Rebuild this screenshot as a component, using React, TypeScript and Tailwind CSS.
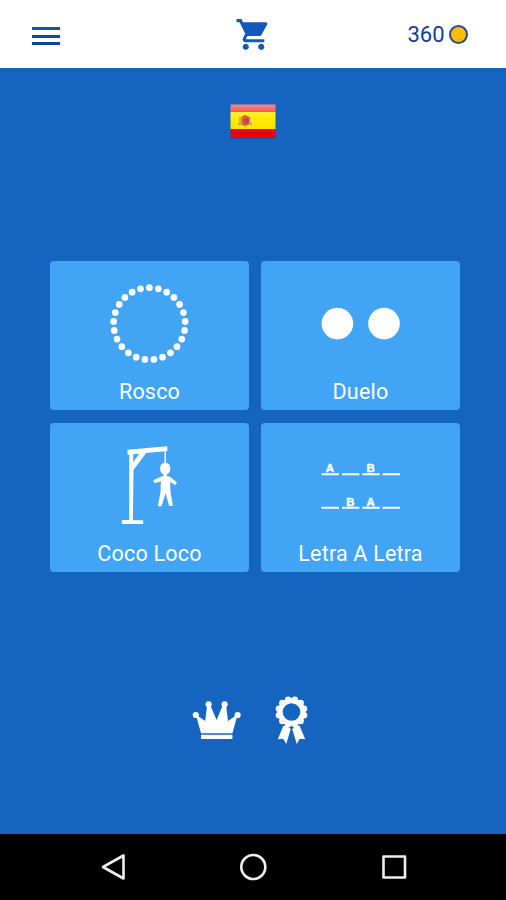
import type { ReactNode } from "react";

const ROSCO_DOTS = Array.from({ length: 25 }, (_, i) => {
  const a = (i / 25) * Math.PI * 2;
  return { x: 39.4 + 35.8 * Math.sin(a), y: 44.7 - 36 * Math.cos(a) };
});

// Scalloped edge of the award rosette.
const ROSETTE_EDGE = Array.from({ length: 12 }, (_, i) => {
  const a = ((i + 0.5) / 12) * Math.PI * 2;
  return { x: 16.5 + 13 * Math.sin(a), y: 17 - 12.8 * Math.cos(a) };
});

function Icon({ children }: { children: ReactNode }) {
  return (
    <svg className="block" width="80" height="90" viewBox="0 0 80 90" fill="#fff">
      {children}
    </svg>
  );
}

function RoscoIcon() {
  return (
    <Icon>
      {ROSCO_DOTS.map((d, i) => (
        <circle key={i} cx={d.x} cy={d.y} r="3.35" />
      ))}
    </Icon>
  );
}

function DueloIcon() {
  return (
    <Icon>
      <circle cx="16.4" cy="44.6" r="15.8" />
      <circle cx="63" cy="44.6" r="15.8" />
    </Icon>
  );
}

function HangmanIcon() {
  return (
    <Icon>
      <g transform="translate(.2 0) scale(.33333)">
        <path d="M52 29 171 19 172 33 108 39 70 90 68 241H99V252H35V240H57V44H52Z" />
        <path d="M69 43 87 41 69 66Z" fill="#42a5f5" />
        <path d="M165 30V72" stroke="#fff" strokeWidth="4" />
        <ellipse cx="165" cy="86" rx="15.5" ry="18.5" />
        <path d="M160 100H170V108L179 110 200 127 196 136 180 126 181 156 188 198H177L166 160 154 199H143L151 156 152 124 133 130 129 121 152 110 160 108Z" />
      </g>
    </Icon>
  );
}

function LetraIcon() {
  return (
    <Icon>
      <path
        d="M.6 34.2H18M21 34.2H38.4M41.3 34.2H58.8M61.6 34.2H79M.6 67.7H18M21 67.7H38.4M41.3 67.7H58.8M61.6 67.7H79"
        stroke="#fff"
        strokeWidth="2"
      />
      <g
        className="font-['Liberation_Sans',sans-serif] text-[11.5px] font-bold"
        textAnchor="middle"
        stroke="#fff"
        strokeWidth=".35"
      >
        <text x="9" y="32">A</text>
        <text x="49.7" y="32">B</text>
        <text x="29.4" y="65.6">B</text>
        <text x="49.7" y="65.6">A</text>
      </g>
    </Icon>
  );
}

function Card({ label, children }: { label: string; children: ReactNode }) {
  return (
    <button className="flex h-[149px] flex-col items-center rounded bg-[#42a4f4] pt-[17.5px]">
      {children}
      <span className="mt-[10.5px] text-[21.5px] leading-[25px] tracking-[0.2px] whitespace-nowrap text-white">
        {label}
      </span>
    </button>
  );
}

function Flag() {
  return (
    <svg className="block" width="46" height="35" viewBox="0 0 46 35">
      <defs>
        <linearGradient id="flagRed" x2="0" y2="1">
          <stop stopColor="#f58b8b" />
          <stop offset="1" stopColor="#f25555" />
        </linearGradient>
        <linearGradient id="flagYellow" x2="0" y2="1">
          <stop stopColor="#fff22c" />
          <stop offset=".5" stopColor="#ffe900" />
          <stop offset="1" stopColor="#ffdf00" />
        </linearGradient>
      </defs>
      <rect x=".5" y="33" width="45" height="1.5" fill="#104f9e" />
      <rect x=".5" y=".5" width="45" height="8" fill="url(#flagRed)" />
      <rect x=".5" y="8" width="45" height="17.5" fill="url(#flagYellow)" />
      <rect x=".5" y="25" width="45" height="8.5" fill="#e30613" />
      <path d="M9 13h2v7H9zM19 13h2v7h-2z" fill="#e0ad43" />
      <path d="M8 19h4v2H8zM18 19h4v2h-4z" fill="#b7ab69" />
      <path d="M11.5 12.5 15 11l4 1.5V19q-1 3-4 3t-3.5-3Z" fill="#d56a27" />
      <path d="M14.5 14H19v5q-2 2-4.5 0Z" fill="#b94360" />
      <path d="M12 15h3v3h-3z" fill="#ee4934" />
    </svg>
  );
}

export default function App() {
  return (
    <div className="flex h-[900px] w-[506px] flex-col overflow-hidden bg-[#1565c0] font-['Roboto',sans-serif]">
      <header className="grid h-[67.5px] shrink-0 grid-cols-3 bg-white">
        <button className="flex flex-col gap-[4.7px] pt-[27px] pl-[31.5px]">
          <span className="h-[3px] w-7 bg-[#0d55b5]" />
          <span className="h-[3px] w-7 bg-[#0d47a9]" />
          <span className="h-[3px] w-7 bg-[#0d43a3]" />
        </button>
        <div className="flex justify-center pt-4 pl-[2px]">
          <svg width="37" height="37" viewBox="0 0 24 24" fill="#1159bb">
            <path d="M7 18c-1.1 0-1.99.9-1.99 2S5.9 22 7 22s2-.9 2-2-.9-2-2-2zM1 2v2h2l3.6 7.59-1.35 2.45c-.16.28-.25.61-.25.96 0 1.1.9 2 2 2h12v-2H7.42c-.14 0-.25-.11-.25-.25l.03-.12.9-1.63h7.45c.75 0 1.41-.41 1.75-1.03l3.58-6.49A1 1 0 0 0 20 4H5.21l-.94-2H1zm16 16c-1.1 0-1.99.9-1.99 2s.89 2 1.99 2 2-.9 2-2-.9-2-2-2z" />
          </svg>
        </div>
        <div className="flex items-start justify-end gap-[4.5px] pr-[38px]">
          <span className="pt-[22px] text-[22px] leading-[26px] text-[#133c9b]">360</span>
          <span className="mt-[24.5px] size-[19px] rounded-full border-2 border-[#334b79] bg-[#fdbd0b]" />
        </div>
      </header>

      <main className="flex flex-1 flex-col items-center">
        <div className="mt-[36.2px]">
          <Flag />
        </div>
        <div className="mt-[122.5px] ml-[4px] grid grid-cols-[198.5px_198.5px] gap-[12.5px]">
          <Card label="Rosco"><RoscoIcon /></Card>
          <Card label="Duelo"><DueloIcon /></Card>
          <Card label="Coco Loco"><HangmanIcon /></Card>
          <Card label="Letra A Letra"><LetraIcon /></Card>
        </div>
        <div className="mt-[123.3px] flex gap-[33px] pr-[6px]">
          <svg width="50" height="50" viewBox="0 0 50 50" fill="#fff">
            <circle cx="3.8" cy="20" r="3.1" />
            <circle cx="16.6" cy="9.3" r="3.1" />
            <circle cx="32.6" cy="9.3" r="3.1" />
            <circle cx="45.6" cy="20" r="3.1" />
            <path d="M3.8 19.5 13.2 26 15.2 9.3H18L24.6 25 31.2 9.3H34L36 26 45.6 19.5 40.4 38.2H9ZM9 39.7H40.4V44H9Z" />
          </svg>
          <svg width="34" height="50" viewBox="0 0 34 50" fill="#fff">
            {ROSETTE_EDGE.map((p, i) => (
              <circle key={i} cx={p.x} cy={p.y} r="3.2" />
            ))}
            <circle cx="16.5" cy="17" r="11.3" fill="none" stroke="#fff" strokeWidth="5" />
            <path d="M8.5 30.5 12.5 31.6 15.8 34 11.2 49 8.2 43.8 2.8 44.2ZM24.5 30.5 20.5 31.6 17.2 34 21.8 49 24.8 43.8 30.2 44.2Z" />
          </svg>
        </div>
      </main>

      <nav className="flex h-[66.5px] shrink-0 items-start justify-center gap-[112.5px] bg-black pt-[19px]">
        <svg width="28" height="28" viewBox="0 0 28 28" fill="none" stroke="#eee" strokeWidth="2.6" strokeLinejoin="round">
          <path d="M24.5 2.5V25.5L4 14Z" />
        </svg>
        <svg width="28" height="28" viewBox="0 0 28 28" fill="none" stroke="#eee" strokeWidth="2.6">
          <circle cx="14.3" cy="14" r="12" />
        </svg>
        <svg width="28" height="28" viewBox="0 0 28 28" fill="none" stroke="#eee" strokeWidth="2.6" strokeLinejoin="round">
          <rect x="3.5" y="3.5" width="21.5" height="21" />
        </svg>
      </nav>
    </div>
  );
}
